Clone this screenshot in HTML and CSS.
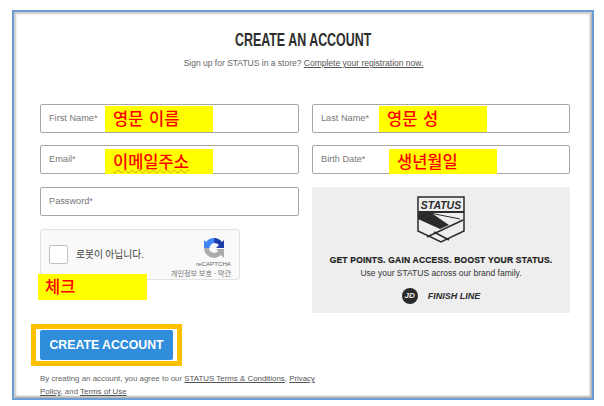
FILE: index.html
```html
<!DOCTYPE html>
<html lang="en">
<head>
    <meta charset="UTF-8">
    <title>Create an account</title>
    <link rel="stylesheet" href="styles.css">
</head>
<body>
    <div class="frame">
        <div class="title-row">
            <h1 class="title">CREATE AN ACCOUNT</h1>
        </div>
        <p class="subtitle">Sign up for STATUS in a store? <a href="#">Complete your registration now.</a></p>

        <div class="form-grid">
            <div class="left-col">
                <div class="field">First Name*<span class="note note-first">영문 이름</span></div>
                <div class="field field-second">Email*<span class="note note-email"><span class="squiggle">이메일주소</span></span></div>
                <div class="field">Password*</div>

                <div class="captcha">
                    <div class="captcha-box"></div>
                    <div class="captcha-label">로봇이 아닙니다.</div>
                    <div class="captcha-brand">
                        <svg class="captcha-logo" width="22" height="22" viewBox="0 0 22 22">
                            <path d="M11 1a10 10 0 0 1 8 4l2-2v8h-8l3-3a6 6 0 0 0-5-2z" fill="#1c3aa9"/>
                            <path d="M11 1a10 10 0 0 0-8 4l-2-2v8h5.500a6 6 0 0 1 5-5z" fill="#4285f4"/>
                            <path d="M1 11h5a5 5 0 0 0 5 5 6 6 0 0 0 4-2l-2-2h8v9l-3-3a10 10 0 0 1-7 3A10 10 0 0 1 1 11z" fill="#ababab"/>
                        </svg>
                        <div class="captcha-name">reCAPTCHA</div>
                        <div class="captcha-links">개인정보 보호 - 약관</div>
                    </div>
                </div>
                <div class="note note-check">체크</div>
            </div>

            <div class="right-col">
                <div class="field">Last Name*<span class="note note-last">영문 성</span></div>
                <div class="field field-second">Birth Date*<span class="note note-birth">생년월일</span></div>

                <div class="promo">
                    <svg class="promo-badge" width="48" height="47" viewBox="0 0 48 47">
                        <path d="M1 1H47V35L24 46L1 35Z" fill="none" stroke="#2b2b2b" stroke-width="1.500"/>
                        <rect x="1" y="15" width="46" height="2" fill="#2b2b2b"/>
                        <path d="M1 16H13L32 29L23 33L1 23Z" fill="#2b2b2b"/>
                        <path d="M13 17L43 23" stroke="#2b2b2b" stroke-width="1"/>
                        <path d="M46 24L10 41" stroke="#2b2b2b" stroke-width="1.500"/>
                        <path d="M17 36L32 44" stroke="#2b2b2b" stroke-width="1.500"/>
                        <text x="24" y="12.500" class="badge-text">STATUS</text>
                    </svg>
                    <div class="promo-head">GET POINTS. GAIN ACCESS. BOOST YOUR STATUS.</div>
                    <div class="promo-sub">Use your STATUS across our brand family.</div>
                    <div class="brands">
                        <span class="jd-logo">JD</span>
                        <span class="finish-line">FINISH LINE</span>
                    </div>
                </div>
            </div>
        </div>

        <div class="button-wrap">
            <button class="create-btn">CREATE ACCOUNT</button>
        </div>

        <p class="terms">By creating an account, you agree to our <a href="#">STATUS Terms &amp; Conditions</a>, <a href="#">Privacy Policy</a>, and <a href="#">Terms of Use</a></p>
    </div>
</body>
</html>
```

FILE: styles.css
```css
html, body {
    margin: 0;
    padding: 0;
}

body {
    width: 604px;
    height: 406px;
    overflow: hidden;
    background-color: #fff;
    font-family: "Liberation Sans", Arial, sans-serif;
    color: #555;
}

.frame {
    box-sizing: border-box;
    width: 582px;
    height: 390px;
    margin: 10px 0 0 12px;
    padding: 20px 0 0 26px;
    border: 2px solid #6a9fd4;
    box-shadow: inset 2px 2px 2px #c9c9c9, inset -2px -2px 2px #b5b5b5;
    background-color: #fff;
}

.title-row {
    width: 527px;
    display: flex;
    justify-content: center;
}

.title {
    margin: 0;
    white-space: nowrap;
    transform: scaleX(0.655);
    font-family: "Liberation Sans", sans-serif;
    font-size: 19px;
    line-height: 15px;
    font-weight: bold;
    color: #2e2e2e;
}

.subtitle {
    margin: 10px 0 0;
    width: 527px;
    text-align: center;
    font-size: 8.500px;
    line-height: 12px;
    color: #666;
}

.subtitle a,
.terms a {
    color: #555;
    text-decoration: underline;
}

.form-grid {
    display: flex;
    gap: 13px;
    margin-top: 35px;
}

.left-col,
.right-col {
    position: relative;
    width: 258px;
    display: flex;
    flex-direction: column;
    gap: 13px;
}

.left-col {
    width: 259px;
}

.field {
    position: relative;
    box-sizing: border-box;
    height: 29px;
    padding-left: 8px;
    border: 1px solid #a6a6a6;
    border-radius: 2px;
    font-size: 9.200px;
    line-height: 27px;
    color: #777;
}

.field-second {
    margin-top: -1px;
}

.note {
    position: absolute;
    background-color: #ff0;
    color: #f00;
    font-family: "Noto Sans CJK KR", sans-serif;
    font-size: 16.500px;
    font-weight: 500;
    word-spacing: 2px;
    line-height: 25px;
    box-sizing: border-box;
    height: 26px;
    width: 108px;
    padding-left: 8px;
}

.note-first { left: 64px; top: 1px; }
.note-email { left: 64px; top: 3px; height: 25px; }
.note-last { left: 66px; top: 1px; }
.note-birth { left: 76px; top: 3px; height: 25px; }
.note-check { left: -2px; top: 170px; width: 109px; padding-left: 7px; }

.squiggle {
    text-decoration: underline wavy #c9a227 1px;
}

.captcha {
    box-sizing: border-box;
    width: 200px;
    height: 51px;
    display: flex;
    align-items: center;
    border: 1px solid #e2e2e2;
    border-radius: 3px;
    background-color: #f9f9f9;
}

.captcha-box {
    box-sizing: border-box;
    width: 19px;
    height: 19px;
    margin-left: 8px;
    border: 1px solid #c1c1c1;
    border-radius: 2px;
    background-color: #fff;
}

.captcha-label {
    margin: 0 0 1px 8px;
    flex: 1;
    font-family: "Noto Sans CJK KR", sans-serif;
    font-size: 9.800px;
    color: #444;
}

.captcha-brand {
    align-self: flex-start;
    display: flex;
    flex-direction: column;
    align-items: flex-end;
    margin-right: 8px;
    padding-top: 7px;
}

.captcha-logo {
    margin-right: 6px;
}

.captcha-name {
    font-size: 6.200px;
    line-height: 8px;
    margin-top: 1px;
    color: #666;
}

.captcha-links {
    font-family: "Noto Sans CJK KR", sans-serif;
    font-size: 7.200px;
    line-height: 9px;
    margin-top: 1px;
    color: #777;
}

.promo {
    height: 126px;
    display: flex;
    flex-direction: column;
    align-items: center;
    background-color: #eee;
}

.promo-badge {
    margin-top: 9px;
}

.badge-text {
    font-family: "Liberation Sans", sans-serif;
    font-size: 10.500px;
    font-weight: bold;
    font-style: italic;
    text-anchor: middle;
    fill: #2b2b2b;
}

.promo-head {
    margin-top: 11px;
    font-size: 8.500px;
    line-height: 12px;
    font-weight: bold;
    letter-spacing: 0.200px;
    -webkit-text-stroke: 0.200px #1c1c1c;
    color: #1c1c1c;
}

.promo-sub {
    margin-top: 1px;
    font-size: 8.500px;
    line-height: 12px;
    color: #333;
}

.brands {
    display: flex;
    align-items: center;
    gap: 10px;
    margin-top: 9px;
}

.jd-logo {
    width: 16px;
    height: 16px;
    border-radius: 50%;
    background-color: #2b2b2b;
    color: #eee;
    font-size: 8px;
    font-weight: bold;
    font-style: italic;
    line-height: 16px;
    text-align: center;
}

.finish-line {
    font-size: 9px;
    font-weight: bold;
    font-style: italic;
    color: #2b2b2b;
}

.button-wrap {
    width: 151px;
    box-sizing: border-box;
    margin: 11px 0 0 -9px;
    padding: 1px 4px;
    border: 5px solid #ffc000;
}

.create-btn {
    display: block;
    width: 133px;
    height: 30px;
    padding: 0;
    border: 0;
    border-radius: 2px;
    background-color: #2f8ddc;
    color: #fff;
    font-family: "Liberation Sans", sans-serif;
    font-size: 12.300px;
    font-weight: bold;
}

.terms {
    margin: 6px 0 0;
    width: 290px;
    font-size: 7.900px;
    line-height: 13px;
    color: #666;
}
```
